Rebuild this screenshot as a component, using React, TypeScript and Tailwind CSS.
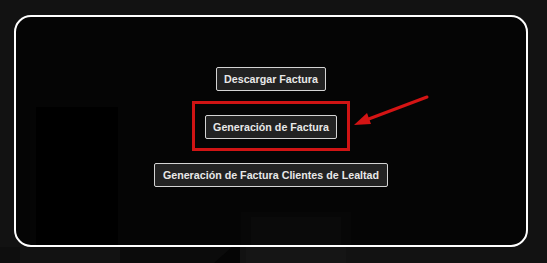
import React from "react";

const btn =
  "h-[24px] px-[7.5px] bg-[#222222] border border-[#d4d4d4] rounded-[2px] text-[#e8e8e8] font-bold text-[10.7px] leading-none whitespace-nowrap flex items-center";

export default function App() {
  return (
    <div
      className="relative w-[547px] h-[263px] bg-[#121212] overflow-hidden pt-[15px] pl-[14px]"
      style={{ fontFamily: '"Liberation Sans", Arial, sans-serif' }}
    >
      {/* faint background picture seen through the overlay */}
      <svg className="absolute inset-0" width="547" height="263" viewBox="0 0 547 263">
        <rect x="0" y="247" width="20" height="16" fill="#0e0e0e" />
        <rect x="120" y="247" width="120" height="16" fill="#0b0b0b" />
        <path d="M214 263 L232 247 L240 247 L240 263 Z" fill="#050505" />
        <rect x="246" y="247" width="100" height="16" fill="#151515" />
      </svg>
      <div className="relative w-[514px] h-[232px] border-2 border-white rounded-[17px] bg-[#050505] overflow-hidden">
        <svg className="absolute inset-0" width="510" height="228" viewBox="0 0 510 228">
          <rect x="20" y="90" width="82" height="140" fill="#000000" />
          <rect x="225" y="195" width="110" height="40" fill="#070707" />
          <rect x="235" y="200" width="90" height="40" fill="#0a0a0a" />
        </svg>
        <div className="relative flex flex-col items-center pt-[50px]">
          <button className={btn}>Descargar Factura</button>
          <div className="mt-[10px] border-[3px] border-[#d01414] px-[10px] pt-[11px] pb-[9px] flex">
            <button className={btn}>Generación de Factura</button>
          </div>
          <button className={btn + " mt-[12px]"}>
            Generación de Factura Clientes de Lealtad
          </button>
        </div>
      </div>
      {/* annotation arrow */}
      <svg className="absolute inset-0 pointer-events-none" width="547" height="263" viewBox="0 0 547 263">
        <line x1="427" y1="97" x2="366" y2="120" stroke="#d41414" strokeWidth="3" strokeLinecap="round" />
        <polygon points="354,125 367,113 371,124" fill="#d41414" />
      </svg>
    </div>
  );
}
